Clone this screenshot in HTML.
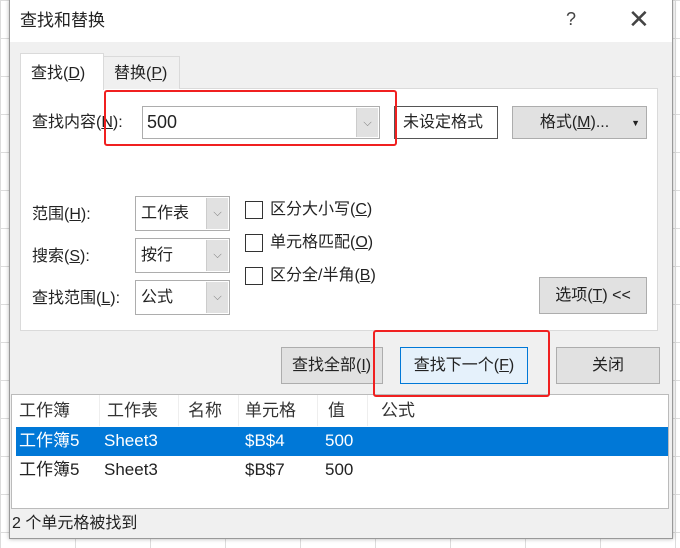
<!DOCTYPE html>
<html><head><meta charset="utf-8"><style>
*{box-sizing:border-box;margin:0;padding:0}
body{width:680px;height:548px;overflow:hidden;background:#fff;font-family:"Liberation Sans","Noto Sans CJK SC",sans-serif;font-size:15px;color:#222;position:relative;white-space:nowrap;line-height:20px}
.a{position:absolute}
.grid{background-image:linear-gradient(#dcdcdc 1px,transparent 1px),linear-gradient(90deg,#dcdcdc 1px,transparent 1px);background-size:75px 38px}
.btn{background:#e1e1e1;border:1px solid #adadad;display:flex;align-items:center;justify-content:center}
.cb{width:18px;height:18px;border:1px solid #333;background:#fff}
.combo{background:#fff;border:1px solid #adadad}
.dd{position:absolute;right:1px;top:1px;bottom:1px;width:22px;background:#e1e1e1;border-left:1px solid #ccc;color:#777;font-size:11px;text-align:center;line-height:30px}
u{text-decoration:underline}
.red{position:absolute;border:2px solid #f02020;border-radius:3px;z-index:5}
</style></head><body>
<div class="a grid" style="left:0;top:0;width:680px;height:548px"></div>
<div class="a" style="left:9px;top:0;width:664px;height:539px;background:#f0f0f0;border:1px solid #999;box-shadow:0 0 4px rgba(0,0,0,.3)"></div>
<div class="a" style="left:10px;top:0;width:662px;height:42px;background:#fff"></div>
<div class="a" style="left:20px;top:11px;font-size:17px">查找和替换</div>
<div class="a" style="left:566px;top:9px;font-size:18px;color:#444">?</div>
<div class="a" style="left:628px;top:9px;font-size:26px;color:#444;font-weight:300">✕</div>
<div class="a" style="left:20px;top:88px;width:638px;height:243px;background:#fff;border:1px solid #dadada"></div>
<div class="a" style="left:103px;top:56px;width:77px;height:33px;background:#f0f0f0;border:1px solid #dadada;border-bottom:none;padding:7px 0 0 10px;font-size:16px">替换(<u>P</u>)</div>
<div class="a" style="left:20px;top:53px;width:84px;height:37px;background:#fff;border:1px solid #dadada;border-bottom:none;padding:10px 0 0 10px;font-size:16px">查找(<u>D</u>)</div>
<div class="a" style="left:32px;top:113px;font-size:16px">查找内容(<u>N</u>):</div>
<div class="a combo" style="left:142px;top:106px;width:238px;height:33px"><span style="position:absolute;left:4px;top:5px;font-size:18px">500</span><div class="dd">⌵</div></div>
<div class="red" style="left:104px;top:90px;width:293px;height:56px"></div>
<div class="a" style="left:394px;top:106px;width:104px;height:33px;border:1px solid #555;background:#fff;font-size:16px;padding:6px 0 0 8px">未设定格式</div>
<div class="a btn" style="left:512px;top:106px;width:135px;height:33px;font-size:16px;padding-right:10px">格式(<u>M</u>)...<span style="position:absolute;right:6px;font-size:9px">▼</span></div>
<div class="a" style="left:32px;top:205px;font-size:16px">范围(<u>H</u>):</div>
<div class="a" style="left:32px;top:247px;font-size:16px">搜索(<u>S</u>):</div>
<div class="a" style="left:32px;top:289px;font-size:16px">查找范围(<u>L</u>):</div>
<div class="a combo" style="left:135px;top:196px;width:95px;height:35px"><span style="position:absolute;left:5px;top:7px;font-size:16px">工作表</span><div class="dd">⌵</div></div>
<div class="a combo" style="left:135px;top:238px;width:95px;height:35px"><span style="position:absolute;left:5px;top:7px;font-size:16px">按行</span><div class="dd">⌵</div></div>
<div class="a combo" style="left:135px;top:280px;width:95px;height:35px"><span style="position:absolute;left:5px;top:7px;font-size:16px">公式</span><div class="dd">⌵</div></div>
<div class="a cb" style="left:245px;top:201px"></div><div class="a" style="left:270px;top:200px;font-size:16px">区分大小写(<u>C</u>)</div>
<div class="a cb" style="left:245px;top:234px"></div><div class="a" style="left:270px;top:233px;font-size:16px">单元格匹配(<u>O</u>)</div>
<div class="a cb" style="left:245px;top:267px"></div><div class="a" style="left:270px;top:266px;font-size:16px">区分全/半角(<u>B</u>)</div>
<div class="a btn" style="left:539px;top:277px;width:108px;height:37px;font-size:16px">选项(<u>T</u>) &lt;&lt;</div>
<div class="a btn" style="left:281px;top:347px;width:102px;height:37px;font-size:16px;justify-content:flex-start;padding-left:10px;overflow:hidden">查找全部(<u>I</u>)</div>
<div class="a btn" style="left:400px;top:347px;width:128px;height:37px;font-size:16px;background:#e5f1fb;border-color:#0078d7">查找下一个(<u>F</u>)</div>
<div class="a btn" style="left:556px;top:347px;width:104px;height:37px;font-size:16px">关闭</div>
<div class="a" style="left:11px;top:394px;width:658px;height:115px;background:#fff;border:1px solid #bbb"></div>
<div class="a" style="left:12px;top:395px;width:656px;height:31px;font-size:17px;color:#333">
<span class="a" style="left:7px;top:6px">工作簿</span>
<span class="a" style="left:87px;top:0;height:31px;border-left:1px solid #eee"></span>
<span class="a" style="left:95px;top:6px">工作表</span>
<span class="a" style="left:166px;top:0;height:31px;border-left:1px solid #eee"></span>
<span class="a" style="left:176px;top:6px">名称</span>
<span class="a" style="left:226px;top:0;height:31px;border-left:1px solid #eee"></span>
<span class="a" style="left:233px;top:6px">单元格</span>
<span class="a" style="left:305px;top:0;height:31px;border-left:1px solid #eee"></span>
<span class="a" style="left:316px;top:6px">值</span>
<span class="a" style="left:355px;top:0;height:31px;border-left:1px solid #eee"></span>
<span class="a" style="left:369px;top:6px">公式</span>
</div>
<div class="a" style="left:16px;top:427px;width:652px;height:29px;background:#0078d7"></div>
<div class="a" style="left:19px;top:431px;font-size:17px;color:#fff;width:640px">
<span class="a" style="left:0">工作簿5</span><span class="a" style="left:85px">Sheet3</span><span class="a" style="left:226px">$B$4</span><span class="a" style="left:306px">500</span></div>
<div class="a" style="left:19px;top:460px;font-size:17px;color:#222;width:640px">
<span class="a" style="left:0">工作簿5</span><span class="a" style="left:85px">Sheet3</span><span class="a" style="left:226px">$B$7</span><span class="a" style="left:306px">500</span></div>
<div class="a" style="left:12px;top:514px;font-size:16px;color:#222">2 个单元格被找到</div>
<div class="red" style="left:373px;top:330px;width:177px;height:67px"></div>
</body></html>
